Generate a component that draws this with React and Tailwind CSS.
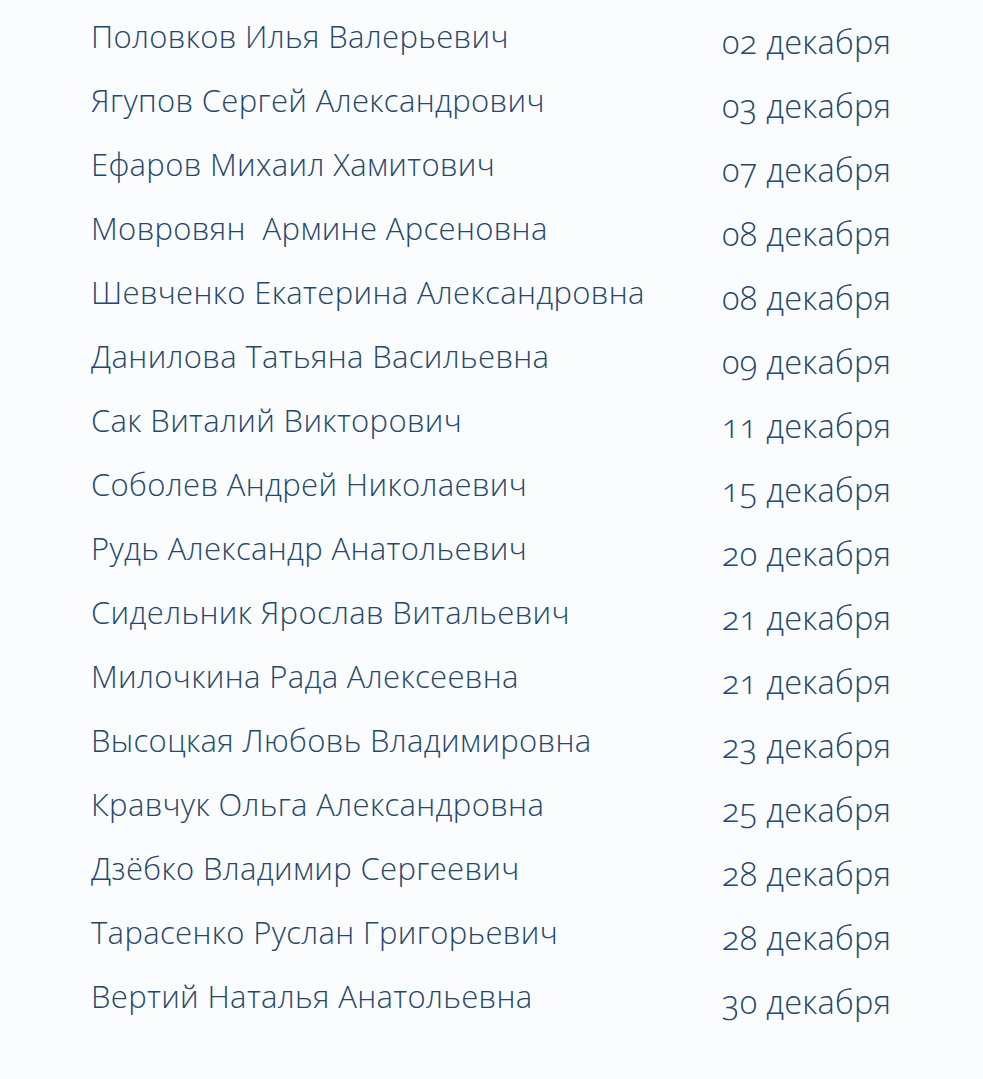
const rows = [
  ["Половков Илья Валерьевич", "02 декабря"],
  ["Ягупов Сергей Александрович", "03 декабря"],
  ["Ефаров Михаил Хамитович", "07 декабря"],
  ["Мовровян  Армине Арсеновна", "08 декабря"],
  ["Шевченко Екатерина Александровна", "08 декабря"],
  ["Данилова Татьяна Васильевна", "09 декабря"],
  ["Сак Виталий Викторович", "11 декабря"],
  ["Соболев Андрей Николаевич", "15 декабря"],
  ["Рудь Александр Анатольевич", "20 декабря"],
  ["Сидельник Ярослав Витальевич", "21 декабря"],
  ["Милочкина Рада Алексеевна", "21 декабря"],
  ["Высоцкая Любовь Владимировна", "23 декабря"],
  ["Кравчук Ольга Александровна", "25 декабря"],
  ["Дзёбко Владимир Сергеевич", "28 декабря"],
  ["Тарасенко Руслан Григорьевич", "28 декабря"],
  ["Вертий Наталья Анатольевна", "30 декабря"],
];

export default function App() {
  return (
    <div
      className="w-[983px] h-[1079px] bg-[#fbfcfd] text-[#24486d] pt-[14px] font-[350]"
      style={{ fontFamily: '"Open Sans", sans-serif', fontVariantNumeric: "oldstyle-nums" }}
    >
      {rows.map(([name, date], i) => (
        <div key={i} className="flex h-[64px] items-start">
          <div className="pl-[91px] w-[722px] text-[31px] leading-[44px] tracking-[0.35px] whitespace-pre">{name}</div>
          <div className="text-[32.5px] leading-[44px] tracking-[0.3px] pt-[6px] whitespace-pre">{date}</div>
        </div>
      ))}
    </div>
  );
}
